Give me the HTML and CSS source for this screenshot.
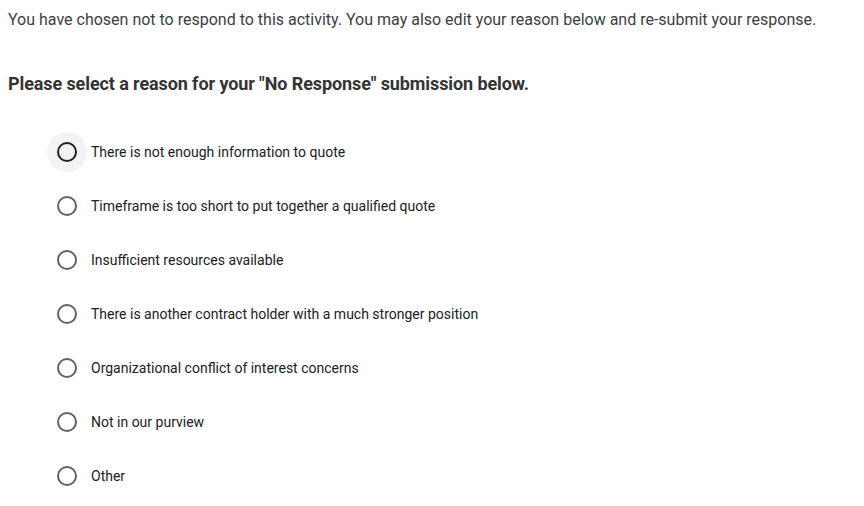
FILE: index.html
```html
<!DOCTYPE html>
<html>
<head>
<meta charset="utf-8">
<link rel="stylesheet" href="styles.css">
</head>
<body>
<div class="page">
  <p class="intro">You have chosen not to respond to this activity. You may also edit your reason below and re-submit your response.</p>
  <h2 class="title">Please select a reason for your "No Response" submission below.</h2>
  <div class="options">
    <label class="option focused"><span class="radio-wrap"><span class="radio"></span></span><span class="label">There is not enough information to quote</span></label>
    <label class="option"><span class="radio-wrap"><span class="radio"></span></span><span class="label">Timeframe is too short to put together a qualified quote</span></label>
    <label class="option"><span class="radio-wrap"><span class="radio"></span></span><span class="label">Insufficient resources available</span></label>
    <label class="option"><span class="radio-wrap"><span class="radio"></span></span><span class="label">There is another contract holder with a much stronger position</span></label>
    <label class="option"><span class="radio-wrap"><span class="radio"></span></span><span class="label">Organizational conflict of interest concerns</span></label>
    <label class="option"><span class="radio-wrap"><span class="radio"></span></span><span class="label">Not in our purview</span></label>
    <label class="option"><span class="radio-wrap"><span class="radio"></span></span><span class="label">Other</span></label>
  </div>
</div>
</body>
</html>
```

FILE: styles.css
```css
html, body {
  margin: 0;
  padding: 0;
  background: #ffffff;
}
body {
  font-family: Roboto, "Liberation Sans", Arial, sans-serif;
}
.page {
  padding: 9px 8px 0 8px;
}
.intro {
  margin: 0;
  font-size: 16px;
  line-height: 22px;
  color: #3c4043;
}
.title {
  margin: 41px 0 0 0;
  font-size: 18px;
  line-height: 24px;
  font-weight: 700;
  color: #333333;
  letter-spacing: -0.1px;
}
.options {
  display: flex;
  flex-direction: column;
  gap: 14px;
  margin-top: 36px;
  padding-left: 39px;
}
.option {
  display: flex;
  align-items: center;
  gap: 4px;
  height: 40px;
  cursor: pointer;
}
.radio-wrap {
  width: 40px;
  height: 40px;
  border-radius: 50%;
  display: flex;
  align-items: center;
  justify-content: center;
  flex: none;
}
.option.focused .radio-wrap {
  background: #f1f3f4;
}
.radio {
  width: 16px;
  height: 16px;
  border: 2px solid #5f6368;
  border-radius: 50%;
}
.option.focused .radio {
  border-color: #202124;
}
.label {
  font-size: 14px;
  color: #202124;
}
```
